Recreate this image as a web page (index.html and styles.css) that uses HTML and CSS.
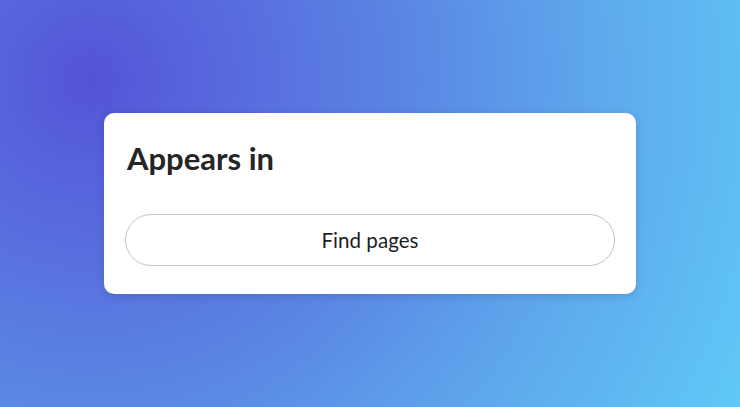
FILE: index.html
```html
<!DOCTYPE html>
<html lang="en">
<head>
    <meta charset="UTF-8">
    <meta name="viewport" content="width=device-width, initial-scale=1.0">
    <title>Appears in</title>
    <link rel="stylesheet" href="styles.css">
</head>
<body>
    <div class="stage">
        <div class="card">
            <h2 class="card-title">Appears in</h2>
            <button type="button" class="find-btn">Find pages</button>
        </div>
    </div>
</body>
</html>
```

FILE: styles.css
```css
html, body {
    margin: 0;
    height: 100%;
}
body {
    font-family: Lato, "Liberation Sans", sans-serif;
    background: radial-gradient(circle at 90px 80px, #5354d7 0%, #5868dd 18%, #5a84e3 42%, #5ea6ec 68%, #5fc9f6 100%);
}
.stage {
    height: 407px;
    display: flex;
    align-items: flex-start;
    justify-content: flex-start;
    padding: 113px 0 0 104px;
    box-sizing: border-box;
}
.card {
    width: 532px;
    height: 181px;
    box-sizing: border-box;
    background-color: #fff;
    border-radius: 10px;
    padding: 27px 21px 28px;
    box-shadow: 0 2px 8px rgba(30, 40, 90, 0.18);
    display: flex;
    flex-direction: column;
}
.card-title {
    margin: 0 0 0 2px;
    font-size: 31px;
    line-height: 36px;
    font-weight: 700;
    color: #252525;
}
.find-btn {
    margin-top: auto;
    height: 52px;
    width: 100%;
    background-color: #fff;
    border: 1.5px solid #c4c4c4;
    border-radius: 26px;
    font-family: Lato, "Liberation Sans", sans-serif;
    font-size: 20.6px;
    color: #1e1e1e;
    cursor: pointer;
}
```
